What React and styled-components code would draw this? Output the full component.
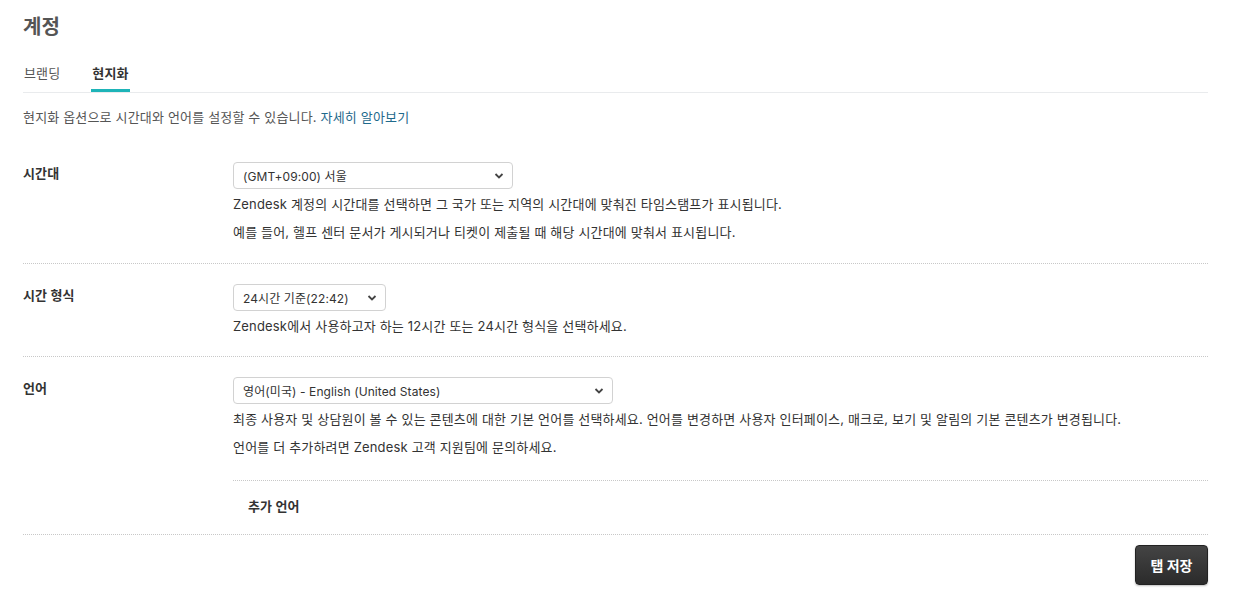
import React from "react";
import styled, { createGlobalStyle } from "styled-components";

const GlobalStyle = createGlobalStyle`
  body {
    margin: 0;
    background: #fff;
    font-family: Inter, "Noto Sans CJK KR", sans-serif;
    color: #333;
  }
`;

const Page = styled.div`
  padding: 14px 44px 20px 23px;
`;

const Title = styled.h1`
  margin: 0;
  font-size: 20px;
  line-height: 26px;
  font-weight: 700;
  color: #555;
`;

const Tabs = styled.div`
  display: flex;
  gap: 30px;
  margin-top: 23px;
  border-bottom: 1px solid #e9ebed;
`;

const Tab = styled.div`
  font-size: 13px;
  line-height: 20px;
  padding: 0 1px 6px;
  letter-spacing: 0.15px;
  color: ${(p) => (p.active ? "#333" : "#555")};
  font-weight: ${(p) => (p.active ? 700 : 400)};
  border-bottom: 3px solid ${(p) => (p.active ? "#1eb4b8" : "transparent")};
`;

const Intro = styled.p`
  margin: 14px 0 0;
  font-size: 13px;
  line-height: 20px;
  letter-spacing: 0.17px;
  color: #555;
`;

const Link = styled.a`
  color: #1f6a8c;
  text-decoration: none;
`;

const Row = styled.div`
  display: grid;
  grid-template-columns: 210px 1fr;
  padding: ${(p) => p.top || 20}px 0 ${(p) => (p.last ? 0 : p.bottom || 20)}px;
  border-bottom: 1px dotted #c8c8c8;
  margin-top: ${(p) => p.mt || 0}px;
`;

const Label = styled.div`
  font-size: 13px;
  font-weight: 700;
  line-height: 20px;
  padding-top: 1px;
  letter-spacing: 0.15px;
  color: #333;
`;

const Field = styled.div`
  display: flex;
  flex-direction: column;
  align-items: flex-start;
`;

const SelectBox = styled.div`
  position: relative;
  width: ${(p) => p.w}px;
  height: 27px;
  box-sizing: border-box;
  border: 1px solid #d2d2d2;
  border-radius: 4px;
  background: #fff;
  display: flex;
  align-items: center;
  padding: 0 9px;
  font-size: 12px;
  letter-spacing: 0.1px;
  color: #333;
`;

const Chevron = styled.svg`
  position: absolute;
  right: 8px;
  top: 9px;
`;

const Help = styled.p`
  margin: ${(p) => (p.first ? 5 : 8)}px 0 0;
  font-size: 13px;
  line-height: 20px;
  letter-spacing: 0.17px;
  color: #333;
`;

const SubSection = styled.div`
  align-self: stretch;
  margin-top: 23px;
  border-top: 1px dotted #c8c8c8;
  padding: 15px 15px 18px;
  font-size: 13px;
  line-height: 20px;
  font-weight: 700;
  letter-spacing: 0.15px;
  color: #333;
`;

const Footer = styled.div`
  display: flex;
  justify-content: flex-end;
  margin-top: 10px;
`;

const SaveButton = styled.button`
  width: 73px;
  height: 40px;
  border: 1px solid #222;
  border-radius: 4px;
  background: linear-gradient(#444, #2b2b2b);
  color: #fff;
  font-family: inherit;
  font-size: 14px;
  font-weight: 700;
  box-shadow: 0 1px 2px rgba(0, 0, 0, 0.25);
`;

const Select = ({ w, children }) => (
  <SelectBox w={w}>
    {children}
    <Chevron width="10" height="8" viewBox="0 0 10 8">
      <path d="M1.5 2 L5 5.5 L8.5 2" fill="none" stroke="#444" strokeWidth="1.8" />
    </Chevron>
  </SelectBox>
);

export default function App() {
  return (
    <Page>
      <GlobalStyle />
      <Title>계정</Title>
      <Tabs>
        <Tab>브랜딩</Tab>
        <Tab active>현지화</Tab>
      </Tabs>
      <Intro>
        현지화 옵션으로 시간대와 언어를 설정할 수 있습니다. <Link href="#">자세히 알아보기</Link>
      </Intro>

      <Row mt={14} top={21} bottom={21}>
        <Label>시간대</Label>
        <Field>
          <Select w={280}>(GMT+09:00) 서울</Select>
          <Help first>Zendesk 계정의 시간대를 선택하면 그 국가 또는 지역의 시간대에 맞춰진 타임스탬프가 표시됩니다.</Help>
          <Help>예를 들어, 헬프 센터 문서가 게시되거나 티켓이 제출될 때 해당 시간대에 맞춰서 표시됩니다.</Help>
        </Field>
      </Row>

      <Row>
        <Label>시간 형식</Label>
        <Field>
          <Select w={153}>24시간 기준(22:42)</Select>
          <Help first>Zendesk에서 사용하고자 하는 12시간 또는 24시간 형식을 선택하세요.</Help>
        </Field>
      </Row>

      <Row last>
        <Label>언어</Label>
        <Field>
          <Select w={380}>영어(미국) - English (United States)</Select>
          <Help first>최종 사용자 및 상담원이 볼 수 있는 콘텐츠에 대한 기본 언어를 선택하세요. 언어를 변경하면 사용자 인터페이스, 매크로, 보기 및 알림의 기본 콘텐츠가 변경됩니다.</Help>
          <Help>언어를 더 추가하려면 Zendesk 고객 지원팀에 문의하세요.</Help>
          <SubSection>추가 언어</SubSection>
        </Field>
      </Row>

      <Footer>
        <SaveButton>탭 저장</SaveButton>
      </Footer>
    </Page>
  );
}
